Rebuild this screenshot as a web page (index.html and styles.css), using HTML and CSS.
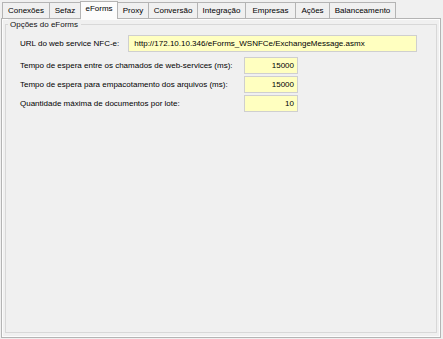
FILE: index.html
```html
<!DOCTYPE html>
<html>
<head>
<meta charset="utf-8">
<link rel="stylesheet" href="styles.css">
</head>
<body>
<div class="window">
  <div class="tabs">
    <div class="tab t1">Conexões</div>
    <div class="tab t2">Sefaz</div>
    <div class="tab t3 active">eForms</div>
    <div class="tab t4">Proxy</div>
    <div class="tab t5">Conversão</div>
    <div class="tab t6">Integração</div>
    <div class="tab t7">Empresas</div>
    <div class="tab t8">Ações</div>
    <div class="tab t9">Balanceamento</div>
  </div>
  <div class="page">
    <div class="group">
      <div class="legend">Opções do eForms</div>
      <div class="row url-row">
        <span class="label">URL do web service NFC-e:</span>
        <span class="input url">http://172.10.10.346/eForms_WSNFCe/ExchangeMessage.asmx</span>
      </div>
      <div class="rows">
        <div class="row">
          <span class="label wide">Tempo de espera entre os chamados de web-services (ms):</span>
          <span class="input small">15000</span>
        </div>
        <div class="row">
          <span class="label wide">Tempo de espera para empacotamento dos arquivos (ms):</span>
          <span class="input small">15000</span>
        </div>
        <div class="row">
          <span class="label wide">Quantidade máxima de documentos por lote:</span>
          <span class="input small">10</span>
        </div>
      </div>
    </div>
  </div>
</div>
</body>
</html>
```
FILE: styles.css
```css
* { box-sizing: border-box; }
html, body { margin: 0; padding: 0; }
body {
  width: 443px;
  height: 339px;
  background: #f0f0f0;
  font-family: "Liberation Sans", Arial, sans-serif;
  font-size: 8px;
  color: #000;
  overflow: hidden;
}
.window {
  display: flex;
  flex-direction: column;
  height: 339px;
  padding: 0 2px 1px 1px;
}
.tabs {
  display: flex;
  align-items: flex-end;
  height: 19px;
  padding-left: 1px;
  position: relative;
  z-index: 1;
  margin-bottom: -1px;
}
.tab {
  height: 16px;
  border: 1px solid #b4b4b4;
  border-bottom: none;
  border-right: none;
  background: #f0f0f0;
  line-height: 15px;
  text-align: center;
  white-space: nowrap;
  margin-bottom: 1px;
  flex: none;
}
.t1 { width: 47px; }
.t2 { width: 31px; }
.t3 { width: 38px; }
.t4 { width: 30px; }
.t5 { width: 49px; }
.t6 { width: 48px; }
.t7 { width: 50px; }
.t8 { width: 34px; }
.t9 { width: 67px; border-right: 1px solid #b4b4b4; }
.tab.active {
  height: 18px;
  background: #fcfcfc;
  border: 1px solid #b4b4b4;
  border-bottom: none;
  line-height: 14px;
  position: relative;
  z-index: 2;
  margin-bottom: 0;
}
.tab.active + .tab { border-left: none; }
.page {
  flex: 1;
  background: #f0f0f0;
  border: 1px solid #b4b4b4;
  box-shadow: inset 1px 1px 0 #fcfcfc, inset -1px -1px 0 #fcfcfc;
  padding: 0 3px 4px 3px;
  display: flex;
  flex-direction: column;
}
.group {
  flex: 1;
  margin-top: 5px;
  border: 1px solid #d8d8d8;
  padding: 0 0 0 14px;
  display: flex;
  flex-direction: column;
}
.legend {
  align-self: flex-start;
  background: #f0f0f0;
  margin: -6px 0 0 -12px;
  padding: 0 3px 0 2px;
  line-height: 11px;
  color: #111;
}
.url-row { margin-top: 5px; }
.row {
  display: flex;
  align-items: center;
  height: 17px;
}
.rows { margin-top: 5px; display: flex; flex-direction: column; gap: 2px; }
.label { white-space: nowrap; }
.wide { width: 224px; }
.input {
  background: #ffffc0;
  border: 1px solid #cfcfcf;
  height: 17px;
  line-height: 15px;
  padding: 0 3px;
  white-space: nowrap;
}
.url { width: 289px; margin-left: 9px; padding-left: 5px; }
.small { width: 54px; text-align: right; }
```
